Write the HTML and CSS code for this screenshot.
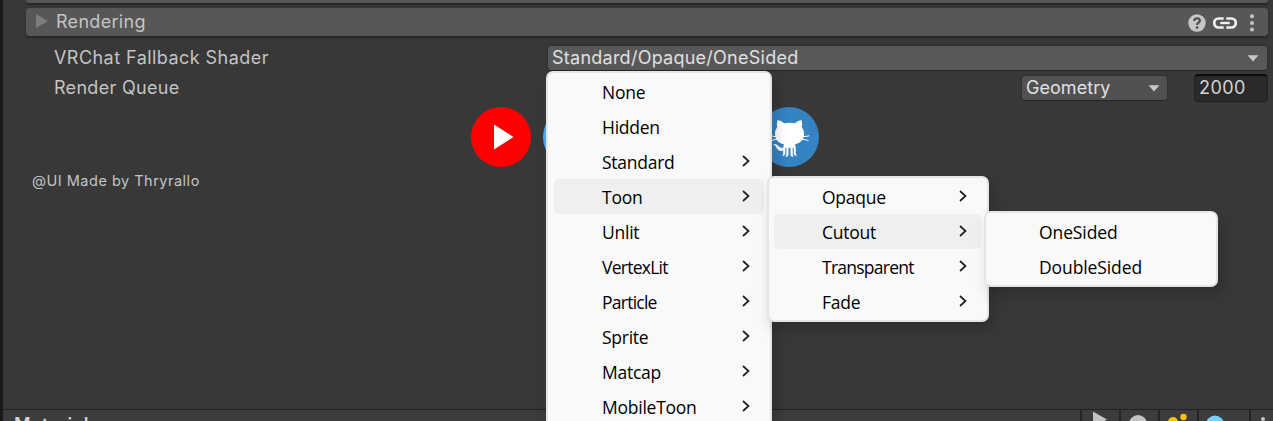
FILE: index.html
```html
<!DOCTYPE html>
<html lang="en">
<head>
<meta charset="utf-8">
<title>Material Inspector</title>
<link rel="stylesheet" href="styles.css">
</head>
<body>
<svg class="defs" width="0" height="0">
  <symbol id="chevron" viewBox="0 0 10 12"><path d="M2 1l5.500 5L2 11" fill="none" stroke="#1f1f1f" stroke-width="1.700"/></symbol>
  <symbol id="arrow" viewBox="0 0 12 7"><path d="M.5.2h11L6 6.600z" fill="#c8c8c8"/></symbol>
</svg>
<div class="inspector">
  <div class="content">
    <div class="previous-header"></div>
    <div class="header">
      <svg class="foldout" width="12" height="14"><path d="M0 0l12 7-12 7z" fill="#7c7c7c"/></svg>
      <span class="header-title">Rendering</span>
      <div class="header-icons">
        <svg width="18" height="18" viewBox="0 0 18 18"><circle cx="9" cy="9" r="8.700" fill="#c6c6c6"/><path d="M6.200 7C6.200 5.200 7.400 4.200 9.100 4.200s2.800 1 2.800 2.500c0 2-2.800 2-2.800 4.300" fill="none" stroke="#4b4b4b" stroke-width="2.100"/><circle cx="9.100" cy="13.600" r="1.300" fill="#4b4b4b"/></svg>
        <svg width="24" height="12" viewBox="0 0 24 12"><path d="M10.700 1.500H5.700a4.500 4.500 0 0 0 0 9h5M13.300 1.500h5a4.500 4.500 0 0 1 0 9h-5" fill="none" stroke="#f0f0f0" stroke-width="2.700"/><path d="M7.300 6h9.400" stroke="#f0f0f0" stroke-width="2.400"/></svg>
        <svg class="kebab" width="4" height="18" fill="#c4c4c4"><circle cx="2" cy="2.200" r="2"/><circle cx="2" cy="9" r="2"/><circle cx="2" cy="15.600" r="2"/></svg>
      </div>
    </div>
    <div class="row shader-row">
      <span class="label fallback">VRChat Fallback Shader</span>
      <div class="select shader"><span>Standard/Opaque/OneSided</span><svg width="12" height="7"><use href="#arrow"/></svg></div>
    </div>
    <div class="row queue-row">
      <span class="label">Render Queue</span>
      <div class="select queue"><span>Geometry</span><svg width="12" height="7"><use href="#arrow"/></svg></div>
      <div class="number">2000</div>
    </div>
    <div class="links">
      <svg width="60" height="60"><circle cx="30" cy="30" r="30" fill="#f00"/><path d="M23 17.500L42.500 30 23 42.500z" fill="#fff"/></svg>
      <svg width="60" height="60"><circle cx="30" cy="30" r="30" fill="#55acee"/></svg>
      <svg class="github" width="60" height="60"><circle cx="30" cy="30" r="30" fill="#3583c2"/>
        <path d="M18.500 13.200c2.800.1 5 1.500 6.600 3.100 3.300-.9 7.500-.9 10.800 0 1.700-1.600 3.800-3 6.600-3.100.8 2.300.9 4.700.2 6.900 1.400 1.800 2.300 4 2.300 6.500 0 6.500-3.200 9.700-9.200 10.800.7 1.100 1 2.200 1 3.600v5.500c0 1 .8 1.500 1.300 2.200-2 .3-3.400-.5-3.400-2.400v-5.600h-1v6.800c0 1 .8 1.600 1 2.300-2 .2-3.200-.7-3.200-2.500v-6.600h-2v6.600c0 1.800-1.200 2.700-3.200 2.500.2-.7 1-1.300 1-2.300v-6.800h-1v5.600c0 1.900-1.400 2.700-3.400 2.400.5-.7 1.300-1.200 1.300-2.200v-2.700c-7 1.200-5.700-4.700-10-6.600 4.900-1.300 5.400 4.400 10 3.600 0-1.300.3-2.400 1-3.400-6-1.100-9.200-4.300-9.200-10.800 0-2.500.9-4.700 2.300-6.500-.7-2.200-.6-4.600.2-6.900z" fill="#fff"/>
        <path d="M18 30l-6-1.200M18.500 32l-6 1.500M43 30l7.500-1.200M42.500 32l7 1.500" stroke="#fff" stroke-width="1"/>
      </svg>
    </div>
    <p class="credit">@UI Made by Thryrallo</p>
  </div>
  <div class="footer">
    <span class="footer-title">Material</span>
    <div class="tools">
      <div class="tool"><svg width="37" height="18"><path d="M11 8.500l14 8-14 8z" fill="#c4c4c4"/></svg></div>
      <div class="tool"><svg width="37" height="18"><circle cx="17" cy="21" r="9" fill="#c4c4c4"/></svg></div>
      <div class="tool"><svg width="37" height="18" fill="#ffc107"><circle cx="13" cy="19" r="5"/><circle cx="23.500" cy="14" r="3.200"/></svg></div>
      <div class="tool wide"><svg width="40" height="18"><circle cx="16" cy="21.500" r="9" fill="#7bd0fa"/></svg></div>
      <div class="tool last"><svg width="22" height="18"><circle cx="12" cy="16" r="2" fill="#c4c4c4"/></svg></div>
    </div>
  </div>
</div>

<div class="menu menu-root">
  <div class="item">None</div>
  <div class="item">Hidden</div>
  <div class="item">Standard<svg><use href="#chevron"/></svg></div>
  <div class="item active">Toon<svg><use href="#chevron"/></svg></div>
  <div class="item">Unlit<svg><use href="#chevron"/></svg></div>
  <div class="item tight">VertexLit<svg><use href="#chevron"/></svg></div>
  <div class="item tight">Particle<svg><use href="#chevron"/></svg></div>
  <div class="item">Sprite<svg><use href="#chevron"/></svg></div>
  <div class="item">Matcap<svg><use href="#chevron"/></svg></div>
  <div class="item">MobileToon<svg><use href="#chevron"/></svg></div>
</div>
<div class="menu menu-toon">
  <div class="item">Opaque<svg><use href="#chevron"/></svg></div>
  <div class="item active">Cutout<svg><use href="#chevron"/></svg></div>
  <div class="item tight">Transparent<svg><use href="#chevron"/></svg></div>
  <div class="item">Fade<svg><use href="#chevron"/></svg></div>
</div>
<div class="menu menu-cutout">
  <div class="item">OneSided</div>
  <div class="item">DoubleSided</div>
</div>
</body>
</html>
```
FILE: styles.css
```css
* { box-sizing: border-box; }
html, body { height: 100%; overflow: hidden; }
body { margin: 0; position: relative; background: #383838; color: #c4c4c4; font: 18px/24px Inter, sans-serif; white-space: nowrap; }
svg { display: block; flex: none; }
.defs { position: absolute; }

.inspector { display: flex; flex-direction: column; height: 421px; border-left: 3px solid #191919; }
.content { flex: 1; padding: 0 5px 0 23px; }
.previous-header { height: 3px; margin-bottom: 5px; background: #565656; border-radius: 0 0 4px 4px; box-shadow: 0 2px 2px #262626; }
.header { display: flex; align-items: center; height: 28px; padding: 0 14px 0 10px; background: #575757; border-radius: 4px; box-shadow: 0 2px 2px #262626; }
.foldout { margin-bottom: 2px; }
.header-title { margin-left: 8px; letter-spacing: .3px; }
.header-icons { display: flex; align-items: center; gap: 7px; margin-left: auto; padding-top: 2px; }
.kebab { margin-left: 6px; }

.row { display: flex; align-items: center; padding-left: 28px; }
.shader-row { height: 26px; margin-top: 9px; }
.queue-row { height: 28px; margin-top: 3px; }
.label { width: 493px; letter-spacing: .3px; }
.fallback { letter-spacing: .45px; }
.select { display: flex; align-items: center; justify-content: space-between; height: 26px; padding: 0 8px 0 4px; background: #515151; border: 1px solid #303030; border-bottom-color: #242424; border-radius: 4px; color: #e0e0e0; letter-spacing: .25px; }
.shader { width: 721px; background: #585858; }
.queue { width: 147px; margin-left: auto; padding: 0 7px 0 4px; letter-spacing: .05px; }
.number { width: 74px; height: 28px; margin: 0 0 0 26px; padding: 0 4px; background: #2a2a2a; border: 1px solid #212121; border-top: 2px solid #0d0d0d; border-radius: 4px; color: #d2d2d2; letter-spacing: .4px; }

.links { display: flex; gap: 12px; margin: 5px 0 0 445px; }
.github { margin-left: 144px; }
.credit { margin: 2px 0 0 6px; font-size: 14.500px; letter-spacing: .5px; }

.footer { display: flex; justify-content: space-between; height: 12px; overflow: hidden; background: #3c3c3c; border-top: 1px solid #202020; }
.footer-title { padding: 3px 0 0 11px; font-weight: 600; color: #d2d2d2; letter-spacing: .5px; }
.tools { display: flex; margin-top: -7px; }
.tool { width: 39px; border-left: 2px solid #242424; }
.wide { width: 52px; }
.last { width: 24px; }

.menu { position: absolute; padding: 1px 6px; background: #f9f9f9; border: 2px solid #e5e5e5; border-radius: 7px; color: #000; font: 17.500px/35px "Open Sans", "Noto Sans", sans-serif; letter-spacing: -.25px; box-shadow: 4px 7px 14px rgba(0, 0, 0, .18); }
.item { display: flex; align-items: center; justify-content: space-between; height: 35px; padding: 2px 13px 0 48px; border-radius: 5px; }
.item svg { width: 10px; height: 12px; margin-bottom: 4px; }
.active { background: #efefef; }
.tight { letter-spacing: -.75px; }
.menu-root { left: 546px; top: 71px; width: 226px; }
.menu-toon { left: 767px; top: 176px; width: 222px; padding-left: 5px; }
.menu-toon .item { padding-left: 48px; padding-right: 13px; }
.menu-cutout { left: 984px; top: 211px; width: 234px; letter-spacing: -.1px; }
.menu-cutout .item { padding-left: 47px; }
```
